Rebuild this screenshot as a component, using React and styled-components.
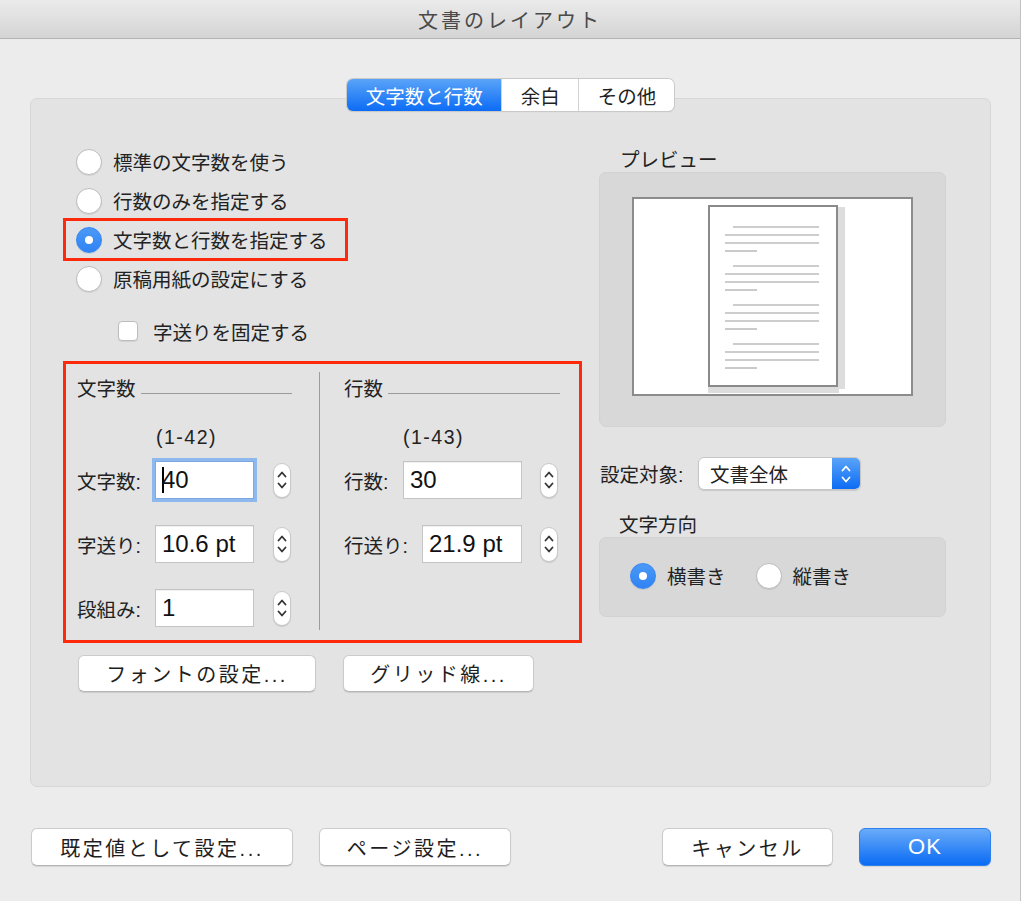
import styled, { createGlobalStyle, css } from "styled-components";

const GlobalStyle = createGlobalStyle`
  html, body {
    margin: 0;
    padding: 0;
    background: #ffffff;
  }
  body {
    font-family: "Liberation Sans", "Noto Sans CJK JP", sans-serif;
    color: #222222;
  }
`

const Window = styled.div`
  width: 1021px;
  height: 901px;
  box-sizing: border-box;
  background: #ececec;
  border-right: 1px solid #c2c2c2;
  display: flex;
  flex-direction: column;
`

const TitleBar = styled.div`
  height: 38px;
  flex-shrink: 0;
  border-bottom: 1px solid #b3b3b3;
  background: linear-gradient(#ebebeb, #d4d4d4);
  display: flex;
  align-items: center;
  justify-content: center;
  font-size: 20px;
  letter-spacing: 3px;
  color: #4a4a4a;
`

const Body = styled.div`
  padding: 40px 29px 0 30px;
  display: flex;
  flex-direction: column;
`

const TabRow = styled.div`
  display: flex;
  justify-content: center;
  position: relative;
  z-index: 1;
`

const Segments = styled.div`
  display: flex;
  height: 32px;
  border-radius: 6px;
  overflow: hidden;
  box-shadow: 0 0 0 1px #c9c9c9, 0 1px 1px rgba(0, 0, 0, 0.18);
`

const Segment = styled.div`
  display: flex;
  align-items: center;
  padding: 0 18px 0 19px;
  font-size: 19.5px;
  background: #ffffff;
  color: #1f1f1f;
  border-left: 1px solid #d3d3d3;
  &:first-child {
    border-left: none;
  }
  ${(p) =>
    p.$active &&
    css`
      background: linear-gradient(#5aa3f8, #0c6cf5);
      color: #ffffff;
    `}
`

const Panel = styled.div`
  margin-top: -13px;
  height: 689px;
  box-sizing: border-box;
  background: #e3e3e3;
  border: 1px solid #d7d7d7;
  border-radius: 7px;
  padding: 43px 0 0 32px;
  display: grid;
  grid-template-columns: 519px 347px;
  column-gap: 17px;
  align-items: start;
`

const Column = styled.div`
  display: flex;
  flex-direction: column;
`

const RadioRow = styled.div`
  display: flex;
  align-items: center;
  height: 39px;
  padding-left: 13px;
  gap: 11px;
  font-size: 19.5px;
  ${(p) =>
    p.$marked &&
    css`
      align-self: flex-start;
      height: 43px;
      margin: -2px 0;
      padding-right: 20px;
      outline: 3px solid #ff2a0c;
      outline-offset: -3px;
    `}
`

const Radio = styled.span`
  width: 26px;
  height: 26px;
  box-sizing: border-box;
  border-radius: 50%;
  flex-shrink: 0;
  display: flex;
  align-items: center;
  justify-content: center;
  background: #ffffff;
  border: 1px solid #bdbdbd;
  box-shadow: 0 1px 1px rgba(0, 0, 0, 0.08);
  ${(p) =>
    p.$on &&
    css`
      background: linear-gradient(#4b99f7, #2f83f3);
      border-color: #3386f3;
      &::after {
        content: "";
        width: 8px;
        height: 8px;
        border-radius: 50%;
        background: #ffffff;
      }
    `}
`

const CheckRow = styled.div`
  display: flex;
  align-items: center;
  height: 36px;
  margin-top: 15px;
  padding-left: 55px;
  gap: 15px;
  font-size: 19.5px;
`

const CheckBox = styled.span`
  width: 20px;
  height: 20px;
  box-sizing: border-box;
  background: #ffffff;
  border: 1px solid #bcbcbc;
  border-radius: 4px;
  box-shadow: 0 1px 1px rgba(0, 0, 0, 0.08);
`

const FieldBox = styled.div`
  margin-top: 12px;
  height: 282px;
  box-sizing: border-box;
  border: 3px solid #ff2a0c;
  padding: 8px 0 10px;
  display: grid;
  grid-template-columns: 253px 1px 1fr;
`

const Divider = styled.div`
  background: #9c9c9c;
`

const FieldColumn = styled.div`
  display: flex;
  flex-direction: column;
  padding-left: ${(p) => p.$pad}px;
  padding-right: ${(p) => p.$right}px;
`

const GroupHeader = styled.div`
  display: flex;
  align-items: center;
  height: 24px;
  margin-top: 3px;
  font-size: 19.5px;
  &::after {
    content: "";
    flex: 1;
    height: 1px;
    background: #9a9a9a;
    margin-left: 5px;
    align-self: flex-end;
    margin-bottom: 5px;
  }
`

const Range = styled.div`
  height: 24px;
  margin-top: 26px;
  padding-left: ${(p) => p.$indent}px;
  font-size: 19.5px;
  letter-spacing: 1.5px;
  display: flex;
  align-items: center;
`

const FieldRow = styled.div`
  display: flex;
  align-items: center;
  height: 38px;
  margin-top: ${(p) => (p.$first ? 12 : 26)}px;
`

const FieldLabel = styled.span`
  width: ${(p) => p.$w}px;
  font-size: 19.5px;
  flex-shrink: 0;
`

const NumberInput = styled.div`
  width: ${(p) => p.$w}px;
  height: 38px;
  box-sizing: border-box;
  background: #ffffff;
  border: 1px solid #c4c4c4;
  box-shadow: inset 0 1px 0 rgba(0, 0, 0, 0.06);
  padding-left: 6px;
  display: flex;
  align-items: center;
  font-size: 24px;
  color: #111111;
  ${(p) =>
    p.$focus &&
    css`
      border-color: #7aa8e2;
      box-shadow: 0 0 0 3px #8fb9ee;
    `}
`

const Caret = styled.span`
  width: 2px;
  height: 26px;
  background: #000000;
  margin-right: -2px;
`

const StepperBox = styled.div`
  width: 18px;
  height: 35px;
  box-sizing: border-box;
  margin-left: ${(p) => p.$gap}px;
  border-radius: 9px;
  background: #ffffff;
  border: 1px solid #c9c9c9;
  box-shadow: 0 1px 1px rgba(0, 0, 0, 0.12);
  display: flex;
  align-items: center;
  justify-content: center;
`

const ButtonRow = styled.div`
  display: flex;
  gap: 27px;
  margin-top: 12px;
  padding-left: 15px;
`

const Button = styled.div`
  width: ${(p) => p.$w}px;
  height: ${(p) => p.$h || 37}px;
  box-sizing: border-box;
  display: flex;
  align-items: center;
  justify-content: center;
  background: #ffffff;
  border: 1px solid #cbcbcb;
  border-bottom-color: #b5b5b5;
  border-radius: 6px;
  box-shadow: 0 1px 1px rgba(0, 0, 0, 0.1);
  font-size: 20px;
  letter-spacing: 2.5px;
  color: #1e1e1e;
  ${(p) =>
    p.$primary &&
    css`
      background: linear-gradient(#69abf9, #0a6bf4);
      border-color: #2f80ef;
      color: #ffffff;
      font-size: 22px;
      letter-spacing: 1px;
    `}
`

const SideLabel = styled.div`
  height: 24px;
  margin-top: ${(p) => p.$top}px;
  padding-left: ${(p) => p.$pad}px;
  font-size: 19.5px;
  display: flex;
  align-items: center;
`

const PreviewBox = styled.div`
  margin-top: 2px;
  height: 255px;
  box-sizing: border-box;
  background: #d8d8d8;
  border: 1px solid #d2d2d2;
  border-radius: 7px;
  padding-top: 24px;
  display: flex;
  justify-content: center;
  align-items: flex-start;
`

const PreviewFrame = styled.div`
  width: 281px;
  height: 199px;
  box-sizing: border-box;
  border: 2px solid #8c8c8c;
  background: #ffffff;
  svg {
    display: block;
  }
`

const SelectRow = styled.div`
  display: flex;
  align-items: center;
  height: 33px;
  margin-top: 30px;
  padding-left: 1px;
`

const SelectLabel = styled.span`
  width: 98px;
  font-size: 19.5px;
`

const Select = styled.div`
  width: 163px;
  height: 33px;
  box-sizing: border-box;
  display: flex;
  border: 1px solid #c6c6c6;
  border-radius: 6px;
  overflow: hidden;
  box-shadow: 0 1px 1px rgba(0, 0, 0, 0.12);
  background: #ffffff;
`

const SelectValue = styled.span`
  flex: 1;
  display: flex;
  align-items: center;
  padding-left: 11px;
  font-size: 19.5px;
`

const SelectArrow = styled.span`
  width: 28px;
  background: linear-gradient(#5aa3f8, #0c6cf5);
  display: flex;
  align-items: center;
  justify-content: center;
`

const DirectionBox = styled.div`
  margin-top: 2px;
  height: 80px;
  box-sizing: border-box;
  background: #d8d8d8;
  border: 1px solid #d2d2d2;
  border-radius: 7px;
  padding: 0 0 3px 30px;
  display: flex;
  align-items: center;
  gap: 30px;
`

const DirectionOption = styled.div`
  display: flex;
  align-items: center;
  gap: 11px;
  font-size: 19.5px;
`

const Footer = styled.div`
  display: flex;
  margin-top: 41px;
  padding-left: 1px;
  gap: 26px;
`

const Spacer = styled.div`
  flex: 1;
`

const Chevrons = ({ color = "#333" }) => (
  <svg width="10" height="22" viewBox="0 0 10 22" fill="none">
    <path d="M1.5 7.5 L5 3.5 L8.5 7.5" stroke={color} strokeWidth="1.8" strokeLinecap="round" strokeLinejoin="round" />
    <path d="M1.5 14.5 L5 18.5 L8.5 14.5" stroke={color} strokeWidth="1.8" strokeLinecap="round" strokeLinejoin="round" />
  </svg>
);

const Stepper = ({ gap }) => (
  <StepperBox $gap={gap}>
    <Chevrons />
  </StepperBox>
);

const PageDrawing = () => {
  const groups = [28, 67, 106, 145];
  return (
    <svg width="277" height="195" viewBox="0 0 277 195">
      <rect x="204" y="8" width="7" height="182" fill="#dddddd" />
      <rect x="74" y="188" width="131" height="6" fill="#dddddd" />
      <rect x="75" y="7" width="128" height="180" fill="#ffffff" stroke="#8a8a8a" strokeWidth="2" />
      {groups.map((y) => (
        <g key={y} stroke="#bdbdbd" strokeWidth="1.6">
          <line x1="99" y1={y} x2="185" y2={y} />
          <line x1="91" y1={y + 8} x2="185" y2={y + 8} />
          <line x1="91" y1={y + 16} x2="185" y2={y + 16} />
          <line x1="91" y1={y + 24} x2="123" y2={y + 24} />
        </g>
      ))}
    </svg>
  );
};

const radioOptions = [
  { label: "標準の文字数を使う" },
  { label: "行数のみを指定する" },
  { label: "文字数と行数を指定する", on: true },
  { label: "原稿用紙の設定にする" },
];

export default function App() {
  return (
    <>
      <GlobalStyle />
      <Window>
        <TitleBar>文書のレイアウト</TitleBar>
        <Body>
          <TabRow>
            <Segments>
              <Segment $active>文字数と行数</Segment>
              <Segment>余白</Segment>
              <Segment>その他</Segment>
            </Segments>
          </TabRow>
          <Panel>
            <Column>
              {radioOptions.map((o) => (
                <RadioRow key={o.label} $marked={o.on}>
                  <Radio $on={o.on} />
                  {o.label}
                </RadioRow>
              ))}
              <CheckRow>
                <CheckBox />
                字送りを固定する
              </CheckRow>
              <FieldBox>
                <FieldColumn $pad={11} $right={27}>
                  <GroupHeader>文字数</GroupHeader>
                  <Range $indent={79}>(1-42)</Range>
                  <FieldRow $first>
                    <FieldLabel $w={78}>文字数:</FieldLabel>
                    <NumberInput $w={99} $focus>
                      <Caret />
                      40
                    </NumberInput>
                    <Stepper gap={19} />
                  </FieldRow>
                  <FieldRow>
                    <FieldLabel $w={78}>字送り:</FieldLabel>
                    <NumberInput $w={99}>10.6 pt</NumberInput>
                    <Stepper gap={19} />
                  </FieldRow>
                  <FieldRow>
                    <FieldLabel $w={78}>段組み:</FieldLabel>
                    <NumberInput $w={99}>1</NumberInput>
                    <Stepper gap={19} />
                  </FieldRow>
                </FieldColumn>
                <Divider />
                <FieldColumn $pad={24} $right={19}>
                  <GroupHeader>行数</GroupHeader>
                  <Range $indent={59}>(1-43)</Range>
                  <FieldRow $first>
                    <FieldLabel $w={59}>行数:</FieldLabel>
                    <NumberInput $w={119}>30</NumberInput>
                    <Stepper gap={18} />
                  </FieldRow>
                  <FieldRow>
                    <FieldLabel $w={78}>行送り:</FieldLabel>
                    <NumberInput $w={100}>21.9 pt</NumberInput>
                    <Stepper gap={18} />
                  </FieldRow>
                </FieldColumn>
              </FieldBox>
              <ButtonRow>
                <Button $w={238}>フォントの設定...</Button>
                <Button $w={191}>グリッド線...</Button>
              </ButtonRow>
            </Column>
            <Column>
              <SideLabel $top={4} $pad={21}>プレビュー</SideLabel>
              <PreviewBox>
                <PreviewFrame>
                  <PageDrawing />
                </PreviewFrame>
              </PreviewBox>
              <SelectRow>
                <SelectLabel>設定対象:</SelectLabel>
                <Select>
                  <SelectValue>文書全体</SelectValue>
                  <SelectArrow>
                    <Chevrons color="#ffffff" />
                  </SelectArrow>
                </Select>
              </SelectRow>
              <SideLabel $top={21} $pad={20}>文字方向</SideLabel>
              <DirectionBox>
                <DirectionOption>
                  <Radio $on />
                  横書き
                </DirectionOption>
                <DirectionOption>
                  <Radio />
                  縦書き
                </DirectionOption>
              </DirectionBox>
            </Column>
          </Panel>
          <Footer>
            <Button $w={262} $h={38}>既定値として設定...</Button>
            <Button $w={192} $h={38}>ページ設定...</Button>
            <Spacer />
            <Button $w={171} $h={38}>キャンセル</Button>
            <Button $w={132} $h={38} $primary>OK</Button>
          </Footer>
        </Body>
      </Window>
    </>
  );
}
